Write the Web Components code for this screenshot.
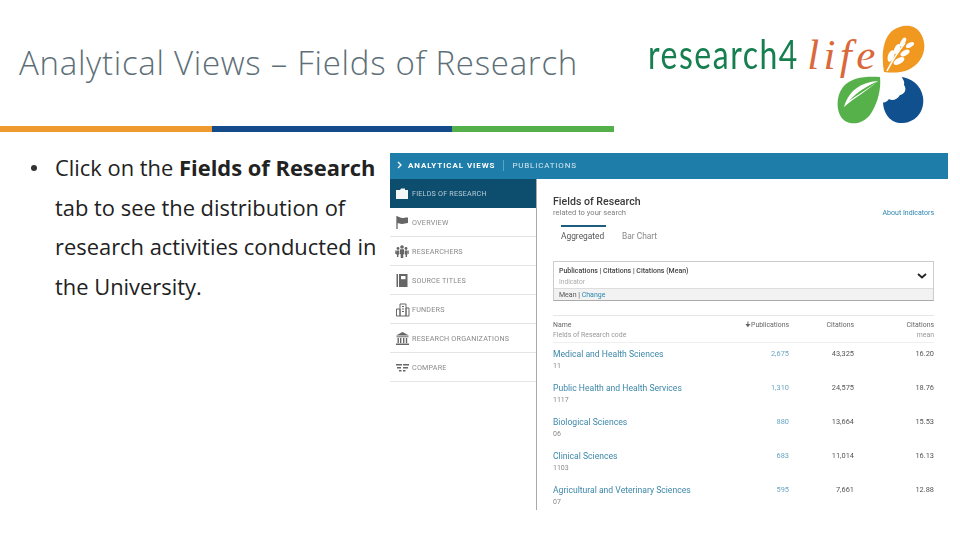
<!DOCTYPE html>
<html lang="en"><head><meta charset="utf-8"><title>Analytical Views</title>
<style>html,body{margin:0;padding:0;background:#fff}</style></head>
<body>
<slide-view>
  <slide-header title-text="Analytical Views – Fields of Research"></slide-header>
  <color-bar></color-bar>
  <slide-body>
    <bullet-text>Click on the <b>Fields of Research</b> tab to see the distribution of research activities conducted in the University.</bullet-text>
    <dim-app></dim-app>
  </slide-body>
</slide-view>
<script>
function def(name, css, html){
  customElements.define(name, class extends HTMLElement{
    connectedCallback(){
      if(this.shadowRoot) return;
      const r=this.attachShadow({mode:'open'});
      r.innerHTML='<style>'+css+'</style>'+(typeof html==='function'?html(this):html);
    }
  });
}
def('slide-view',':host{display:flex;flex-direction:column;width:960px;height:540px;overflow:hidden;background:#fff;font-family:"Open Sans",sans-serif}','<slot></slot>');
def('slide-header',`:host{display:flex;height:126px;box-sizing:border-box;padding-left:19px;position:relative}
h1{margin:43px 0 0;font:300 33px/40px "Open Sans",sans-serif;color:#5d6f78;white-space:nowrap;flex:none;width:629px;letter-spacing:.72px}`,
 h=>`<h1>${h.getAttribute('title-text')}</h1><r4l-logo></r4l-logo>`);
def('r4l-logo',`:host{display:block;position:relative;width:280px;height:126px;flex:none}
.t{position:absolute;left:0;top:30px;white-space:nowrap;line-height:48px;display:flex;align-items:baseline}
.r{display:inline-block;font:400 40px/48px "Lato",sans-serif;color:#157f4f;letter-spacing:1.9px;transform:scaleX(.8);transform-origin:0 50%;margin-right:-37.5px}
.l{font:italic 400 43px/48px "Liberation Serif",serif;color:#d9683a;letter-spacing:4.4px;margin-left:8px}
svg{position:absolute;left:189px;top:25px}`,
`<div class="t"><span class="r">research4</span><span class="l">life</span></div>
<svg width="90" height="100" viewBox="0 0 90 100">
<path fill="#f0981f" d="M47 47C44 30 46 14 55 6C64-1 78-2 84 9C92 23 85 39 71 45C63 48 55 48 47 47Z"/>
<path d="M50 46C55 36 60 28 68 18" stroke="#fff" stroke-width="1.6" fill="none"/>
<g fill="#fff"><ellipse cx="54" cy="31" rx="3" ry="6" transform="rotate(20 54 31)"/><ellipse cx="60" cy="24" rx="2.6" ry="5.5" transform="rotate(25 60 24)"/><ellipse cx="66" cy="17" rx="2.2" ry="5" transform="rotate(30 66 17)"/><ellipse cx="62" cy="36" rx="6" ry="3" transform="rotate(-30 62 36)"/><ellipse cx="68" cy="28" rx="5" ry="2.6" transform="rotate(-30 68 28)"/><ellipse cx="73" cy="20" rx="4.5" ry="2.2" transform="rotate(-30 73 20)"/></g>
<path fill="#57b14b" d="M43 52C30 51 14 52 6 62C-2 72-1 90 8 96C18 102 31 96 36 85C42 74 44 62 43 52Z"/>
<path fill="#fff" d="M41 56C28 57 13 62 7 82C17 73 30 66 41 56Z"/>
<path fill="#57b14b" d="M41 56C30 61 20 67 12 76C20 70 31 64 41 56Z"/>
<path fill="#11508f" d="M46 76C46 90 55 99 66 98C80 97 88 85 86 72C84 60 74 52 62 52L46 60Z"/>
<path fill="#fff" d="M45 51H64C66 54 68 57 67 60C70 64 68 69 63 70C60 75 55 76 52 74C50 77 47 78 45 77Z"/>
</svg>`);
def('color-bar',`:host{display:flex;height:6px;width:614px;flex:none}
i{display:block}i:nth-of-type(1){width:212px;background:#ef9a2e}i:nth-of-type(2){width:240px;background:#154b8b}i:nth-of-type(3){width:162px;background:#53b04a}`,'<i></i><i></i><i></i>');
def('slide-body',`:host{display:flex;padding-top:21px;flex:1;min-height:0}`,'<slot></slot>');
def('bullet-text',`:host{display:block;box-sizing:border-box;width:390px;flex:none;padding:0 0 0 55px;position:relative;margin-top:-5px;font:400 21.9px/39.6px "Open Sans",sans-serif;color:#222}
:host::before{content:"";position:absolute;left:31px;top:17px;width:6px;height:6px;border-radius:50%;background:#333}
div{width:333px}b{font-weight:700}`,'<div><slot></slot></div>');
def('dim-app',`:host{display:flex;flex-direction:column;width:558px;height:357px;flex:none;font-family:Roboto,sans-serif;filter:blur(.45px)}
.top{height:26px;background:#1f7ea9;display:flex;align-items:center;color:#fff;font-size:8px;letter-spacing:.82px;flex:none;padding-bottom:2px;box-sizing:border-box}
.top svg{margin:0 6px 0 7px}.top b{font-weight:700;letter-spacing:.9px}.sep{width:1px;height:11px;background:#5aa3c4;margin:0 8px}
.top span{color:#d5e8f0}
.main{display:flex;flex:1;min-height:0}
nav{width:146px;flex:none}
section{flex:1;border-left:1px solid #aaa;box-sizing:border-box;padding:0 14px 0 16px;min-width:0}`,
`<div class="top"><svg width="5" height="8" viewBox="0 0 5 8"><path d="M1 1l3 3-3 3" stroke="#fff" stroke-width="1.3" fill="none"/></svg><b>ANALYTICAL VIEWS</b><i class="sep"></i><span>PUBLICATIONS</span></div>
<div class="main"><nav>
<nav-item active label="FIELDS OF RESEARCH" icon="folder"></nav-item>
<nav-item label="OVERVIEW" icon="flag"></nav-item>
<nav-item label="RESEARCHERS" icon="people"></nav-item>
<nav-item label="SOURCE TITLES" icon="book"></nav-item>
<nav-item label="FUNDERS" icon="funder"></nav-item>
<nav-item label="RESEARCH ORGANIZATIONS" icon="bank"></nav-item>
<nav-item label="COMPARE" icon="compare"></nav-item>
</nav><section><fields-panel></fields-panel></section></div>`);
const icons={
folder:'<path d="M1 4h4l1-1.5h4V4h3v9H1z" fill="#f4f7f8"/>',
flag:'<path d="M2 1v13" stroke="#666" stroke-width="1.3"/><path d="M2 2c3-1 3 1.5 6 1s3-.5 5-.5V8c-3 0-3 1-6 1S4 8 2 8.5z" fill="#666"/>',
people:'<g fill="#666"><circle cx="7" cy="3" r="1.8"/><path d="M5 5.3h4l.4 5H8.3V14H5.7v-3.7H4.6z"/><circle cx="3" cy="4.5" r="1.4"/><path d="M1.2 6.5h3l-.2 4H3.4V13H2v-2.5H1z"/><circle cx="11" cy="4.5" r="1.4"/><path d="M9.8 6.5h3l-.2 4H12V13h-1.4v-2.5H10z"/><rect x="0" y="6.5" width=".7" height="3.5"/><rect x="13.2" y="6.5" width=".7" height="3.5"/></g>',
book:'<rect x="1.5" y="1" width="1.5" height="13" fill="#666"/><path d="M4 1h8.5v13H4z" fill="#666"/><rect x="6" y="3" width="4.5" height="3.2" fill="#fff"/>',
funder:'<g fill="none" stroke="#666" stroke-width="1"><path d="M5 2h6v12H5zM1.5 7H5v7H1.5zM11 6h3v8h-3z"/><path d="M7 4.5h2M7 7h2M7 9.5h2" /></g>',
bank:'<g fill="#666"><path d="M7.5 1L14 4.5H1z"/><rect x="1.5" y="5.3" width="12" height="1"/><rect x="2.5" y="7" width="1.4" height="5"/><rect x="5" y="7" width="1.4" height="5"/><rect x="8" y="7" width="1.4" height="5"/><rect x="10.8" y="7" width="1.4" height="5"/><rect x="1" y="12.5" width="13" height="1.5"/></g>',
compare:'<g fill="#666"><rect x="1" y="4" width="6" height="1.5"/><rect x="8" y="4" width="6" height="1.5"/><rect x="2" y="7" width="4" height="1.5"/><rect x="8" y="7" width="5" height="1.5"/><rect x="4" y="10" width="2.5" height="1.5"/><rect x="8" y="10" width="2.5" height="1.5"/></g>'};
def('nav-item',`:host{display:flex;align-items:center;height:29px;box-sizing:border-box;border-bottom:1px solid #e4e4e4;font-size:7.2px;letter-spacing:.2px;color:#8a8a8a;white-space:nowrap;padding-left:5px}
:host([active]){background:#0d4d6d;color:#b9cdd7;border-bottom:0}
svg{margin-right:2px;flex:none}`,
h=>`<svg width="15" height="15" viewBox="0 0 15 15">${icons[h.getAttribute('icon')]}</svg><span>${h.getAttribute('label')}</span>`);
def('fields-panel',`:host{display:block;color:#555}
.h{display:flex;justify-content:space-between;align-items:flex-end;padding-top:17px}
h2{margin:0;font:500 10.6px/12px Roboto,sans-serif;color:#3a3a3a}
.s{font-size:7.6px;line-height:10px;color:#808080}
a{color:#2b86ad;text-decoration:none}
.about{font-size:7px;line-height:10px}
.tabs{display:flex;font-size:8.4px;line-height:11px;padding-left:8px;gap:16px;margin-top:7px;color:#888}
.tabs span{padding-top:6px}.tabs .on{border-top:2px solid #1d5e7e;color:#555;padding-top:4px;width:45px;box-sizing:border-box}
.box{margin-top:19px;border:1px solid #ccc;border-bottom:1px solid #aaa;display:flex;flex-direction:column;height:40px;box-sizing:border-box}
.a{flex:1;display:flex;align-items:center;justify-content:space-between;padding:2px 6px 0 5px}
.a b{display:block;font:500 7px/10px Roboto,sans-serif;color:#444}
.a small{display:block;font-size:6.6px;line-height:9px;color:#aaa;margin-top:2px}
.m{height:12px;background:#f2f2f2;border-top:1px solid #ddd;font-size:7px;line-height:12px;padding-left:5px;color:#555;box-sizing:border-box}
.table{margin-top:14px}`,
`<div class="h"><div><h2>Fields of Research</h2><div class="s">related to your search</div></div><a class="about" href="#">About Indicators</a></div>
<div class="tabs"><span class="on">Aggregated</span><span>Bar Chart</span></div>
<div class="box"><div class="a"><div><b>Publications | Citations | Citations (Mean)</b><small>Indicator</small></div><svg width="10" height="6" viewBox="0 0 10 6"><path d="M1 1l4 3.5L9 1" stroke="#222" stroke-width="1.8" fill="none"/></svg></div><div class="m">Mean | <a href="#">Change</a></div></div>
<div class="table"><table-head></table-head>
<table-row name="Medical and Health Sciences" code="11" p="2,675" c="43,325" m="16.20"></table-row>
<table-row name="Public Health and Health Services" code="1117" p="1,310" c="24,575" m="18.76"></table-row>
<table-row name="Biological Sciences" code="06" p="880" c="13,664" m="15.53"></table-row>
<table-row name="Clinical Sciences" code="1103" p="683" c="11,014" m="16.13"></table-row>
<table-row name="Agricultural and Veterinary Sciences" code="07" p="595" c="7,661" m="12.88"></table-row></div>`);
const cols='display:grid;grid-template-columns:1fr 65px 65px 80px;';
def('table-head',`:host{${cols}height:28px;box-sizing:border-box;border-top:1px solid #e6e6e6;border-bottom:1px solid #efefef;padding-top:4px;font-size:6.9px;line-height:10px;color:#666}
div{text-align:right}div.n{text-align:left}small{display:block;font-size:6.9px;color:#999}`,
`<div class="n">Name<small>Fields of Research code</small></div><div style="white-space:nowrap">&#129035;Publications</div><div>Citations</div><div>Citations<small>mean</small></div>`);
def('table-row',`:host{${cols}height:34px;box-sizing:border-box;padding-top:5px;font-size:7.4px;line-height:11px;color:#555}
a{display:block;color:#3c87a8;text-decoration:none;font-size:8.6px;line-height:12px;white-space:nowrap}
small{display:block;font-size:7px;line-height:12px;color:#888}
div{text-align:right}div.n{text-align:left}.p{color:#6aa6c2}`,
h=>`<div class="n"><a href="#">${h.getAttribute('name')}</a><small>${h.getAttribute('code')}</small></div><div class="p">${h.getAttribute('p')}</div><div>${h.getAttribute('c')}</div><div>${h.getAttribute('m')}</div>`);
</script>
</body></html>
